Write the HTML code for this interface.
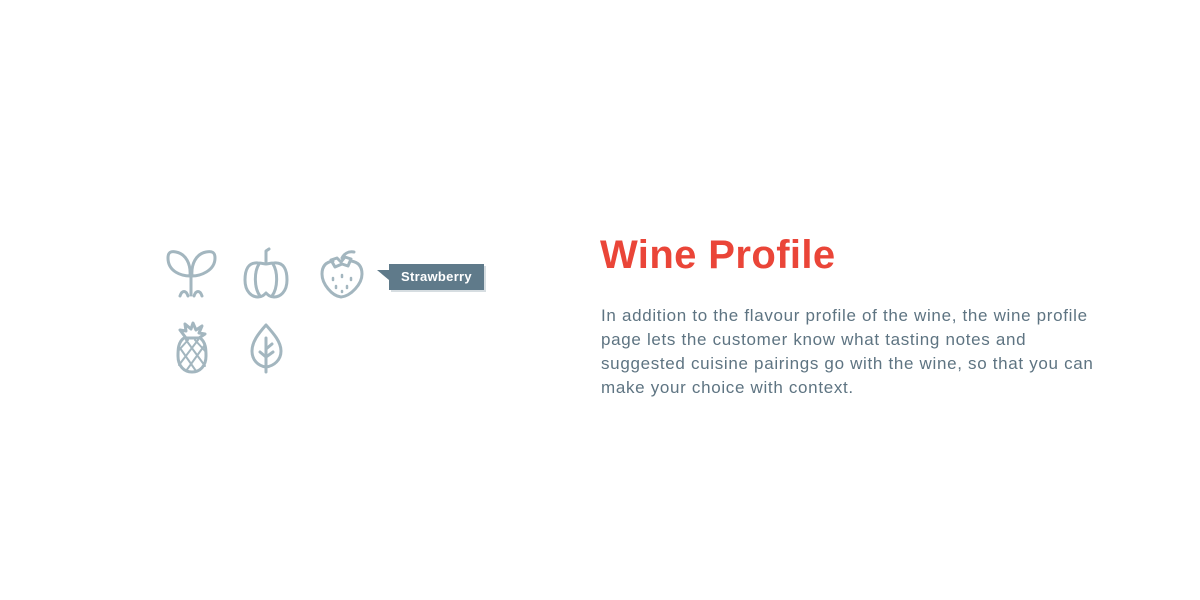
<!DOCTYPE html>
<html><head><style>
body{margin:0;width:1200px;height:600px;background:#fff;position:relative;overflow:hidden;font-family:"Liberation Sans",sans-serif}
h1{position:absolute;left:600px;top:229px;margin:0;font-size:40px;font-weight:bold;color:#ea4538;letter-spacing:0.4px;line-height:52px}
p{position:absolute;left:601px;top:304px;margin:0;font-size:17px;line-height:24px;color:#5e7482;white-space:nowrap;letter-spacing:0.68px}
.tip{position:absolute;left:389px;top:264px;width:95px;height:26px;background:#5f7a8a;color:#fff;font-weight:bold;font-size:13px;line-height:26px;text-align:center;box-shadow:2px 2px 0 #d6dde1;letter-spacing:0.3px}
.tip:before{content:"";position:absolute;left:-12px;top:6px;border-bottom:10px solid transparent;border-right:12px solid #5f7a8a}
svg{position:absolute;left:0;top:0}
</style></head><body>
<svg width="600" height="600" fill="none" stroke="#a3b6bf" stroke-width="3" stroke-linecap="round" stroke-linejoin="round">
<path d="M191 295V275"/>
<path d="M190 276C182 276 168 272 168 258C168 252 171 251 176 252C186 254 191 264 190 276Z"/>
<path d="M192 276C200 276 215 271 215 258C215 252 212 251 206 252C196 254 191 264 192 276Z"/>
<path d="M180 296C182 290 186 290 188 296M194 296C196 290 200 290 202 296"/>
<path d="M266 262V251l3-2"/>
<path d="M258 263C248 262 245 270 245 280C245 292 252 297 258 297C262 297 264 295 266 293C268 295 270 297 274 297C280 297 287 292 287 280C287 270 284 262 274 263C270 263 268 264 266 264C264 264 262 263 258 263Z"/>
<path d="M259 264C254 272 254 288 260 296M273 264C278 272 278 288 272 296"/>
<path d="M333 261C326 262 322 266 322 274C322 284 332 296 341 297C351 296 362 284 362 274C362 266 358 262 351 261"/>
<path d="M331 260L337 258L341 262L345 257L351 259L348 266L342 264L335 267Z"/>
<path d="M342 258C344 254 348 251 354 252"/>
<g stroke-width="2.5"><path d="M333 278v2M342 275v2M351 278v2M336 286v2M347 286v2M342 291v1"/></g>
<path d="M184 338C178 342 178 350 178 356C178 366 184 372 192 372C200 372 206 366 206 356C206 350 206 342 200 338Z"/>
<path d="M186 338L180 330L186 331L185 324L191 329L193 323L196 330L202 326L199 333L205 334L199 338"/>
<g stroke-width="2"><path d="M180 348L196 371M186 340L205 366M195 340L206 352M204 346L186 371M198 340L179 365M188 340L179 350"/></g>
<path d="M266 325C258 334 252 342 252 351C252 360 258 366 266 367C274 366 281 360 281 351C281 342 274 334 266 325Z"/>
<path d="M266 338V372M266 349l6-5M266 357l7-5M266 357l-6-5"/>
</svg>
<div class="tip">Strawberry</div>
<h1>Wine Profile</h1>
<p>In addition to the flavour profile of the wine, the wine profile<br>page lets the customer know what tasting notes and<br>suggested cuisine pairings go with the wine, so that you can<br>make your choice with context.</p>
</body></html>
